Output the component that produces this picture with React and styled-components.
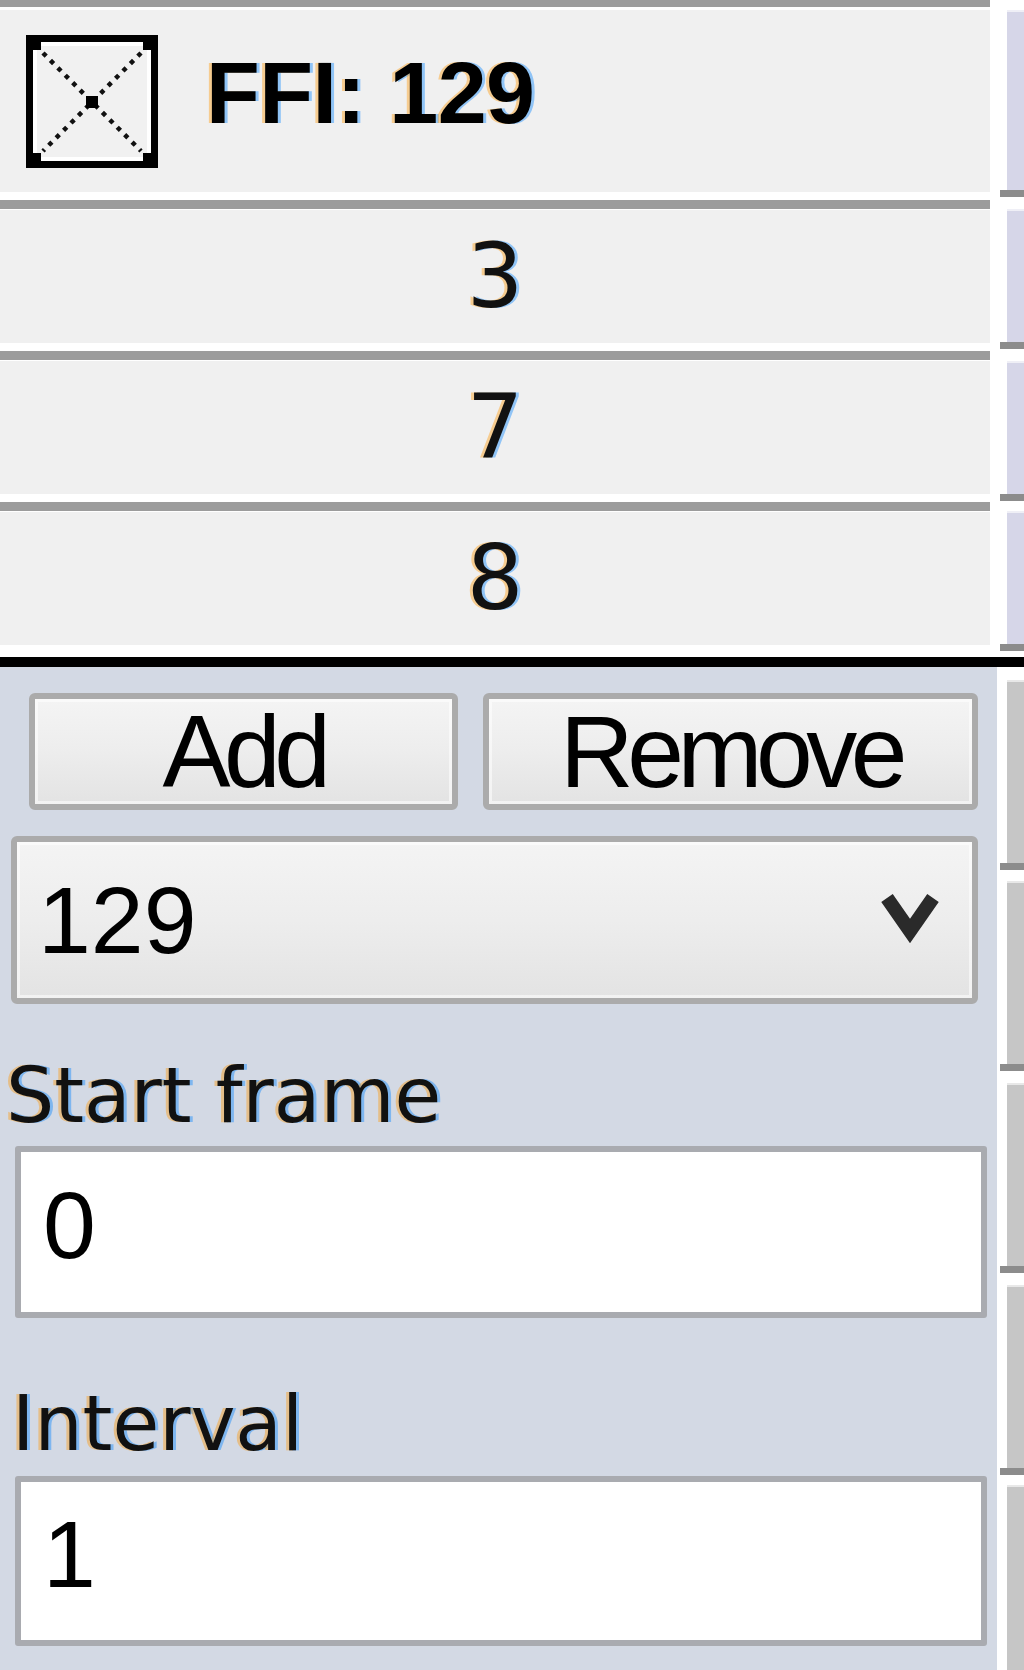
import React from "react";
import styled, { createGlobalStyle } from "styled-components";

const GlobalStyle = createGlobalStyle`
  html, body {
    margin: 0;
    padding: 0;
    background: #ffffff;
  }
  body {
    width: 1024px;
    height: 1670px;
    overflow: hidden;
    font-family: "Liberation Sans", Arial, sans-serif;
  }
`;

const cleartype = `
  text-shadow: -3px 0 0 rgba(255, 150, 0, 0.4), 3px 0 0 rgba(0, 130, 255, 0.4);
`;

const Screen = styled.div`
  width: 1024px;
  height: 1670px;
  display: flex;
  flex-direction: column;
  background: #ffffff;
`;

const Section = styled.div`
  display: flex;
  height: ${(p) => p.height}px;
`;

const List = styled.div`
  width: 990px;
  margin-right: 7px;
  border-top: 7px solid #9c9c9c;
  padding-top: 3px;
  display: flex;
  flex-direction: column;
`;

const Row = styled.div`
  height: ${(p) => p.height}px;
  flex: none;
  background: #f0f0f0;
  display: flex;
  align-items: center;
  justify-content: ${(p) => (p.header ? "flex-start" : "center")};
  padding-left: ${(p) => (p.header ? 26 : 0)}px;
  border-bottom: ${(p) => (p.last ? 0 : 8)}px solid #ffffff;
  box-shadow: ${(p) => (p.last ? "none" : "0 9px 0 #9c9c9c")};
  margin-bottom: ${(p) => (p.last ? 0 : 10)}px;
`;

const HeaderText = styled.span`
  margin-left: 48px;
  padding-bottom: 16px;
  font-family: "Liberation Sans", Arial, sans-serif;
  font-weight: 700;
  font-size: 88px;
  line-height: 88px;
  letter-spacing: -0.5px;
  color: #000;
  ${cleartype}
`;

const RowText = styled.span`
  font-family: "DejaVu Sans", Verdana, sans-serif;
  font-size: 89px;
  line-height: 89px;
  color: #111;
  ${cleartype}
`;

const Strip = styled.div`
  width: 27px;
  display: flex;
  flex-direction: column;
  background: #ffffff;
`;

const StripCell = styled.div`
  flex: ${(p) => (p.fill ? "1" : "none")};
  display: flex;
  flex-direction: column;
  padding-top: ${(p) => p.gap}px;
`;

const StripBlock = styled.div`
  margin-left: 10px;
  height: ${(p) => (p.fill ? "auto" : `${p.height}px`)};
  flex: ${(p) => (p.fill ? "1" : "none")};
  background: ${(p) => p.color};
  box-shadow: inset 0 2px 0 rgba(255, 255, 255, 0.6);
`;

const StripDash = styled.div`
  margin-left: 3px;
  height: 7px;
  background: #8c8c8c;
`;

const Divider = styled.div`
  height: 10px;
  background: #000;
  flex: none;
`;

const Panel = styled.div`
  width: 997px;
  background: #d3d9e4;
  padding-top: 26px;
  box-sizing: border-box;
  display: flex;
  flex-direction: column;
`;

const ButtonRow = styled.div`
  display: flex;
  gap: 25px;
  margin-left: 29px;
  height: 117px;
`;

const raised = `
  box-sizing: border-box;
  border: 6px solid #ababab;
  border-radius: 6px;
  background: linear-gradient(#f4f4f4 0%, #ededed 50%, #e3e3e3 100%);
  box-shadow: inset 0 0 0 3px rgba(255, 255, 255, 0.55);
`;

const Button = styled.div`
  ${raised}
  width: ${(p) => p.width}px;
  height: 117px;
  display: flex;
  align-items: center;
  justify-content: center;
  font-family: "Liberation Sans", Arial, sans-serif;
  font-size: 102px;
  line-height: 102px;
  letter-spacing: -6.5px;
  color: #000;
`;

const Combo = styled.div`
  ${raised}
  margin-top: 26px;
  margin-left: 11px;
  width: 967px;
  height: 168px;
  display: flex;
  align-items: center;
  justify-content: space-between;
  padding: 0 32px 0 21px;
  font-family: "Liberation Sans", Arial, sans-serif;
  font-size: 95px;
  line-height: 95px;
  color: #000;
`;

const Label = styled.div`
  margin-top: ${(p) => p.top}px;
  margin-left: ${(p) => p.indent}px;
  height: 76px;
  font-family: "DejaVu Sans", Verdana, sans-serif;
  font-size: 76px;
  line-height: 76px;
  color: #111;
  ${cleartype}
`;

const TextBox = styled.div`
  box-sizing: border-box;
  margin-top: ${(p) => p.top}px;
  margin-left: 15px;
  width: 972px;
  height: ${(p) => p.height}px;
  background: #ffffff;
  border: 6px solid #a9abb0;
  border-radius: 3px;
  display: flex;
  align-items: center;
  padding: 0 0 14px 22px;
  font-family: "Liberation Sans", Arial, sans-serif;
  font-size: 95px;
  line-height: 95px;
  color: #000;
`;

const CheckBox = () => (
  <svg width="132" height="133" viewBox="0 0 132 133">
    <rect x="3.5" y="3.5" width="125" height="126" fill="#f1f1f1" stroke="#000" strokeWidth="7" />
    <rect x="9" y="9" width="114" height="115" fill="none" stroke="#fff" strokeWidth="4" />
    <rect x="4" y="4" width="11" height="11" fill="#000" />
    <rect x="117" y="4" width="11" height="11" fill="#000" />
    <rect x="4" y="118" width="11" height="11" fill="#000" />
    <rect x="117" y="118" width="11" height="11" fill="#000" />
    <line x1="17" y1="18" x2="115" y2="116" stroke="#111" strokeWidth="4.5" strokeDasharray="4.5 6" />
    <line x1="115" y1="18" x2="17" y2="116" stroke="#111" strokeWidth="4.5" strokeDasharray="4.5 6" />
    <rect x="60" y="61" width="12" height="12" fill="#000" />
  </svg>
);

const Chevron = () => (
  <svg width="60" height="52" viewBox="0 0 60 52">
    <polyline points="7,4 30,37 53,4" fill="none" stroke="#2a2a2a" strokeWidth="14" strokeLinejoin="miter" />
  </svg>
);

const rows = ["3", "7", "8"];

const topCells = [
  { gap: 10, height: 180 },
  { gap: 12, height: 133 },
  { gap: 12, height: 133 },
  { gap: 10, height: 133 },
];

const bottomCells = [13, 11, 12, 12];

const App = () => (
  <Screen>
    <GlobalStyle />
    <Section height={657}>
      <List>
        <Row header height={182}>
          <CheckBox />
          <HeaderText>FFI: 129</HeaderText>
        </Row>
        {rows.map((r, i) => (
          <Row key={r} height={133} last={i === rows.length - 1}>
            <RowText>{r}</RowText>
          </Row>
        ))}
      </List>
      <Strip>
        {topCells.map((c, i) => (
          <StripCell key={i} gap={c.gap}>
            <StripBlock height={c.height} color="#d6d6e8" />
            <StripDash />
          </StripCell>
        ))}
      </Strip>
    </Section>
    <Divider />
    <Section height={1003}>
      <Panel>
        <ButtonRow>
          <Button width={429}>Add</Button>
          <Button width={495}>Remove</Button>
        </ButtonRow>
        <Combo>
          <span>129</span>
          <Chevron />
        </Combo>
        <Label top={54} indent={6}>Start frame</Label>
        <TextBox top={12} height={172}>0</TextBox>
        <Label top={68} indent={12}>Interval</Label>
        <TextBox top={14} height={170}>1</TextBox>
      </Panel>
      <Strip>
        {bottomCells.map((g, i) => (
          <StripCell key={i} gap={g}>
            <StripBlock height={183} color="#c6c6c6" />
            <StripDash />
          </StripCell>
        ))}
        <StripCell fill gap={10}>
          <StripBlock fill color="#c6c6c6" />
        </StripCell>
      </Strip>
    </Section>
  </Screen>
);

export default App;
